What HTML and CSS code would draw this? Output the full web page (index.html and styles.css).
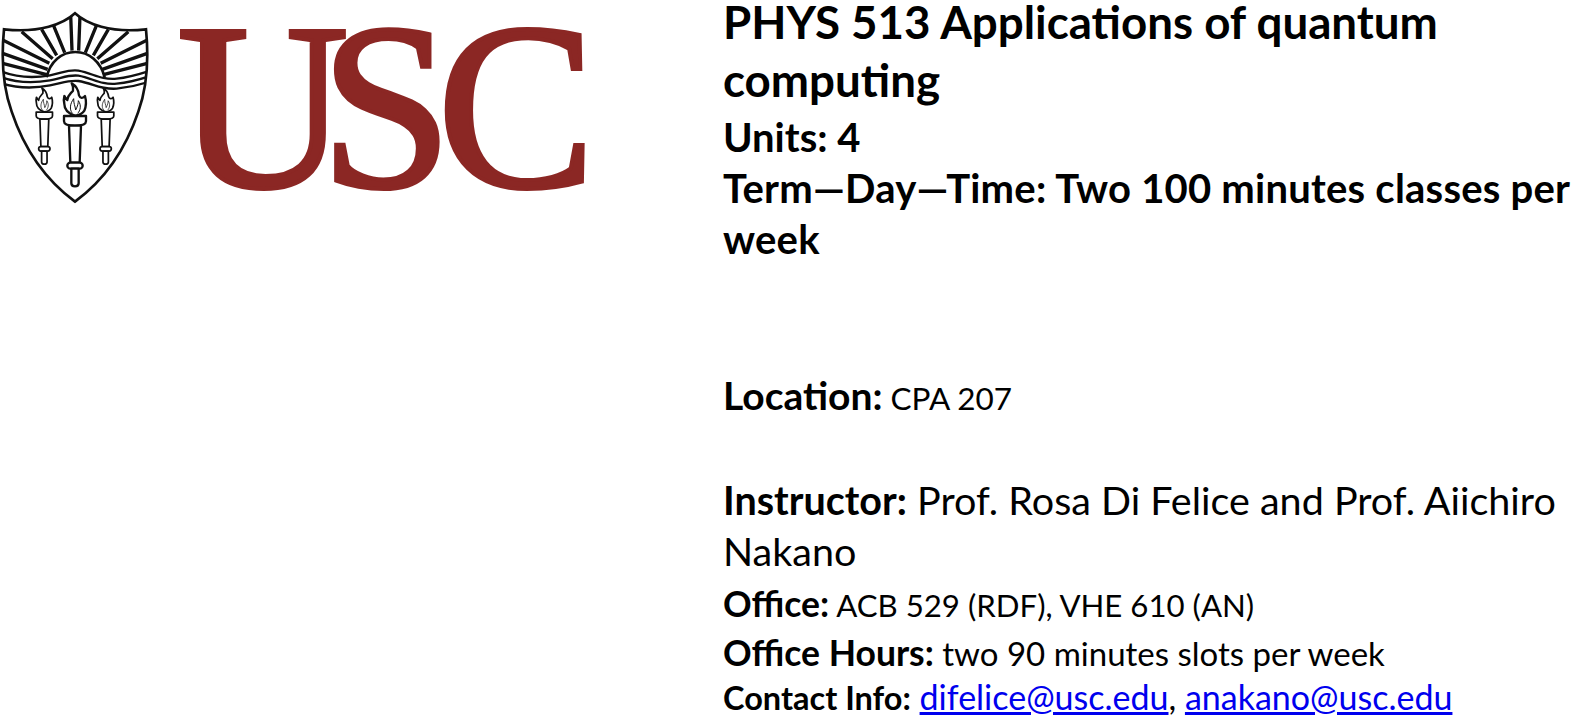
FILE: index.html
```html
<!DOCTYPE html>
<html lang="en">
<head>
<meta charset="utf-8">
<title>PHYS 513 Applications of quantum computing</title>
<link rel="stylesheet" href="styles.css">
</head>
<body>
<main class="page">
  <div class="logo">
    <svg class="shield" viewBox="0 0 510 645" aria-hidden="true">
      <defs>
        <clipPath id="shieldClip"><path d="M225 40C190 72 120 100 12 88C4 170 8 260 35 335C70 440 130 535 225 605C320 535 380 440 415 335C442 260 446 170 438 88C330 100 260 72 225 40Z"/></clipPath>
        <g id="torch" fill="#fff" stroke="#111" stroke-width="7" stroke-linejoin="round">
          <path d="M0 75C-16 70-32 62-32 40C-34 30-34 22-32 16C-28 22-26 26-23 28C-22 14-14 10-6 0C-4-8-6-14-10-22C4-14 10-4 12 14C16 24 22 24 30 16C34 30 34 46 28 60C22 70 12 74 0 75Z"/>
          <path d="M-8 68C-18 55-14 38-4 24C-4 40 0 44 2 58C8 46 10 38 10 30C20 44 16 60 8 68" fill="none" stroke-width="3"/>
          <path d="M-33 76H33V92C33 100 22 105 0 105C-22 105-33 100-33 92Z"/>
          <path d="M-18 105H18L14 216H-14Z"/>
          <rect x="-23" y="216" width="46" height="18" rx="9"/>
          <path d="M-11 234H11V278C11 290-11 290-11 278Z"/>
        </g>
      </defs>
      <g clip-path="url(#shieldClip)">
        <g fill="none" stroke="#111" stroke-width="10">
          <path d="M216 152L212 45M236 152L240 45"/>
          <path d="M194 158L158 70M170 166L125 88"/>
          <path d="M256 158L292 70M280 166L325 88"/>
          <path d="M158 176L65 95M292 176L385 95"/>
          <path d="M148 190L8 120M302 190L442 120"/>
          <path d="M143 208L8 160M307 208L442 160"/>
          <path d="M140 224L8 190M310 224L442 190"/>
        </g>
        <path d="M140 232C150 185 185 156 226 156C267 156 302 185 314 232" fill="#fff" stroke="#111" stroke-width="8"/>
        <g fill="none" stroke="#111" stroke-width="7">
          <path d="M5 215C50 232 100 235 150 226C190 218 205 208 235 212C280 220 300 240 350 236C390 232 420 222 445 214"/>
          <path d="M5 232C50 248 100 250 150 241C190 233 205 224 235 227C280 235 300 255 350 251C390 247 420 238 445 230"/>
          <path d="M5 250C50 264 100 266 150 256C190 248 205 240 235 243C280 250 300 270 350 266C390 262 420 254 445 246"/>
        </g>
      </g>
      <path d="M225 40C190 72 120 100 12 88C4 170 8 260 35 335C70 440 130 535 225 605C320 535 380 440 415 335C442 260 446 170 438 88C330 100 260 72 225 40Z" fill="none" stroke="#111" stroke-width="8"/>
      <use href="#torch" transform="translate(225 272)"/>
      <use href="#torch" transform="translate(133 280) scale(.74)"/>
      <use href="#torch" transform="translate(317 280) scale(.74)"/>
    </svg>
    <svg class="wordmark" viewBox="0 0 420 180" role="img" aria-label="USC">
      <text x="1 144 261" y="164">USC</text>
    </svg>
  </div>
  <section class="info">
    <h1 class="title">PHYS 513 Applications of quantum computing</h1>
    <p class="meta">Units: 4</p>
    <p class="meta term">Term—Day—Time: Two 100 minutes classes per week</p>
    <p class="location"><strong class="label">Location:</strong> CPA 207</p>
    <p class="instructor"><strong>Instructor:</strong> Prof. Rosa Di Felice and Prof. Aiichiro Nakano</p>
    <p class="office"><strong class="label">Office:</strong> ACB 529 (RDF), VHE 610 (AN)</p>
    <p class="hours"><strong class="label">Office Hours:</strong> two 90 minutes slots per week</p>
    <p class="contact"><strong class="contact-label">Contact Info:</strong> <a href="#">difelice@usc.edu</a>, <a href="#">anakano@usc.edu</a></p>
  </section>
</main>
</body>
</html>
```

FILE: styles.css
```css
html, body {
  margin: 0;
  padding: 0;
  background: #fff;
}
body {
  color: #000;
  font-family: "Lato", "Liberation Sans", sans-serif;
  overflow: hidden;
}
.page {
  display: grid;
  grid-template-columns: 723px 848px;
  height: 716px;
  overflow: hidden;
}
.logo {
  display: flex;
  align-items: flex-start;
  gap: 6px;
}
.shield {
  width: 170px;
  height: 215px;
  flex: none;
}
.wordmark {
  width: 420px;
  height: 180px;
  flex: none;
  margin-top: 23px;
}
.wordmark text {
  font-family: "Liberation Serif", serif;
  font-weight: 400;
  font-size: 238px;
  fill: #8b2724;
  stroke: #8b2724;
  stroke-width: 4px;
}
.info {
  margin-top: -7px;
}
.info p, .info h1 {
  margin: 0;
}
.info .title {
  font-size: 45.7px;
  line-height: 58px;
  font-weight: 700;
}
.info .meta {
  font-size: 40px;
  line-height: 51px;
  font-weight: 700;
}
.info .term {
  letter-spacing: .23px;
}
.info .title + .meta {
  margin-top: 3px;
}
.info .location {
  margin-top: 104px;
  font-size: 31.5px;
  line-height: 52px;
}
.location .label {
  font-size: 39px;
}
.info .instructor {
  margin-top: 50px;
  font-size: 39.5px;
  line-height: 51px;
}
.info .office {
  margin-top: 4px;
  font-size: 31.2px;
  line-height: 48px;
}
.info .hours {
  font-size: 33px;
  line-height: 48px;
}
.office .label, .hours .label {
  font-size: 35.5px;
}
.info .contact {
  font-size: 34px;
  line-height: 40px;
}
.contact-label {
  font-size: 32.5px;
}
.contact a {
  color: #0000ee;
}
```
